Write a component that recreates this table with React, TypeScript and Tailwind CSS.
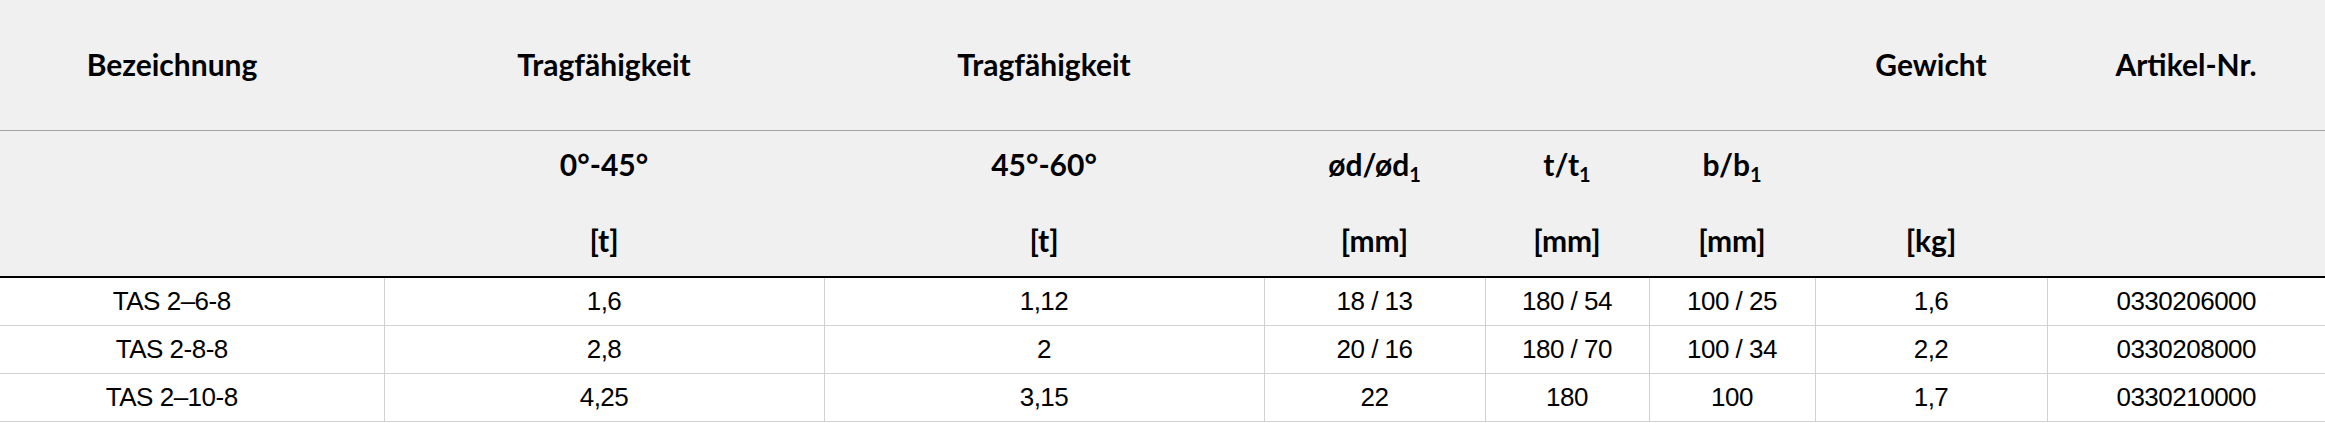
const cols = ["w-[384px]", "w-[440px]", "w-[440px]", "w-[221px]", "w-[164px]", "w-[166px]", "w-[232px]", "w-[278px]"];

const rows = [
  ["TAS 2–6-8", "1,6", "1,12", "18 / 13", "180 / 54", "100 / 25", "1,6", "0330206000"],
  ["TAS 2-8-8", "2,8", "2", "20 / 16", "180 / 70", "100 / 34", "2,2", "0330208000"],
  ["TAS 2–10-8", "4,25", "3,15", "22", "180", "100", "1,7", "0330210000"],
];

const Sub = ({ children }: { children: React.ReactNode }) => (
  <sub className="text-[20px] -bottom-[6px]">{children}</sub>
);

// two stacked lines of the unit header row
const UnitCell = ({ top, unit, first }: { top?: React.ReactNode; unit?: string; first?: boolean }) => (
  <th className={`p-0 pb-[15px] align-top font-bold ${first ? "pr-[40px]" : ""}`}>
    <div className="pt-[12px] h-[54px] leading-[42px]">{top}</div>
    <div className="mt-[34px] h-[42px] leading-[42px]">{unit}</div>
  </th>
);

export default function App() {
  return (
    <div className="w-[2325px] bg-white">
      <table className="w-[2325px] table-fixed border-collapse text-center">
        <colgroup>
          {cols.map((c, i) => (
            <col key={i} className={c} />
          ))}
        </colgroup>
        <thead className="bg-[#f0f0f0] text-black text-[30px] font-[Lato,sans-serif]">
          <tr className="h-[130px] border-b border-[#a6a6a6]">
            <th className="p-0 pr-[40px] font-bold">Bezeichnung</th>
            <th className="p-0 font-bold">Tragfähigkeit</th>
            <th className="p-0 font-bold">Tragfähigkeit</th>
            <th className="p-0" />
            <th className="p-0" />
            <th className="p-0" />
            <th className="p-0 font-bold">Gewicht</th>
            <th className="p-0 font-bold">Artikel-Nr.</th>
          </tr>
          <tr className="border-b-2 border-black">
            <UnitCell first />
            <UnitCell top="0°-45°" unit="[t]" />
            <UnitCell top="45°-60°" unit="[t]" />
            <UnitCell
              top={
                <>
                  ød/ød<Sub>1</Sub>
                </>
              }
              unit="[mm]"
            />
            <UnitCell
              top={
                <>
                  t/t<Sub>1</Sub>
                </>
              }
              unit="[mm]"
            />
            <UnitCell
              top={
                <>
                  b/b<Sub>1</Sub>
                </>
              }
              unit="[mm]"
            />
            <UnitCell unit="[kg]" />
            <UnitCell />
          </tr>
        </thead>
        <tbody className="text-black text-[26px] tracking-[-0.5px] font-['Liberation_Sans',Arial,sans-serif]">
          {rows.map((r, i) => (
            <tr key={i} className="h-[48px] border-b border-[#d0d0d0]">
              {r.map((v, j) => (
                <td
                  key={j}
                  className={`p-0 leading-[47px] ${j === 0 ? "pr-[40px]" : "border-l border-[#d0d0d0]"}`}
                >
                  {v}
                </td>
              ))}
            </tr>
          ))}
        </tbody>
      </table>
    </div>
  );
}
